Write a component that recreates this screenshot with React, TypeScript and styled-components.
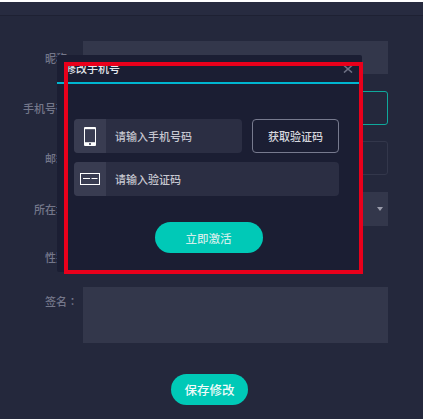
import React from 'react';
import styled, { createGlobalStyle } from 'styled-components';

const GlobalStyle = createGlobalStyle`
  html, body {
    margin: 0;
    padding: 0;
    background: #24283c;
    font-family: "Noto Sans CJK SC", "Noto Sans", sans-serif;
  }
`;

const Page = styled.div`
  position: relative;
  width: 423px;
  height: 419px;
  overflow: hidden;
  background: #24283c;
  border-top: 2px solid #fff;
  box-sizing: border-box;
`;

const TopBar = styled.div`
  height: 13px;
  background: #272b40;
  border-bottom: 1px solid #1e2133;
`;

const Form = styled.div`
  display: flex;
  flex-direction: column;
  gap: 16px;
  padding: 25px 35px 0 0;
`;

const Row = styled.div<{ $height?: number; $pushed?: boolean }>`
  display: grid;
  grid-template-columns: 78px 305px;
  column-gap: 5px;
  align-items: center;
  height: ${(p) => p.$height ?? 34}px;
  margin-top: ${(p) => (p.$pushed ? 1 : 0)}px;
`;

const SignRow = styled(Row)`
  align-items: start;
`;

const Label = styled.div<{ $offset?: number }>`
  font-size: 11px;
  font-weight: 500;
  line-height: 16px;
  color: #74778a;
  text-align: right;
  white-space: nowrap;
  padding-top: ${(p) => p.$offset ?? 0}px;
`;

const Colon = styled.span`
  font-family: "Noto Sans CJK TC", sans-serif;
`;

const Field = styled.div<{ $variant?: 'filled' | 'focus' | 'outline' }>`
  position: relative;
  height: 100%;
  box-sizing: border-box;
  border-radius: ${(p) => (p.$variant === 'filled' || !p.$variant ? 0 : 3)}px;
  background: ${(p) => (p.$variant === 'filled' || !p.$variant ? '#33374b' : 'transparent')};
  border: ${(p) =>
    p.$variant === 'focus'
      ? '1px solid #0fa89c'
      : p.$variant === 'outline'
        ? '1px solid #33374b'
        : 'none'};
`;

const Caret = styled.span`
  position: absolute;
  right: 5px;
  top: 15px;
  border-left: 3px solid transparent;
  border-right: 3px solid transparent;
  border-top: 4px solid #9a9cab;
`;

const SaveRow = styled.div`
  display: flex;
  justify-content: center;
  margin-top: 31px;
  width: 419px;
`;

const PillButton = styled.button<{ $width: number; $size: number; $color: string }>`
  width: ${(p) => p.$width}px;
  height: 31px;
  padding: 0;
  border: none;
  border-radius: 16px;
  background: #00c9b7;
  color: ${(p) => p.$color};
  font-family: inherit;
  font-size: ${(p) => p.$size}px;
  font-weight: 500;
`;

const Modal = styled.div`
  position: absolute;
  left: 57px;
  top: 53px;
  width: 305px;
  height: 217px;
  display: flex;
  flex-direction: column;
  background: #1b1e33;
  border-radius: 2px;
`;

const ModalHeader = styled.div`
  height: 29px;
  box-sizing: border-box;
  padding-left: 8px;
  display: flex;
  align-items: flex-end;
  justify-content: space-between;
  border-bottom: 2px solid #00b5d0;
`;

const ModalTitle = styled.div`
  font-size: 11px;
  font-weight: 500;
  line-height: 14px;
  margin-bottom: 7px;
  color: #e6e7ec;
`;

const CloseIcon = styled.svg`
  width: 10px;
  height: 8px;
  margin: 0 9px 9px 0;
  stroke: #6d7084;
  stroke-width: 1.6;
  fill: none;
`;

const ModalBody = styled.div`
  display: flex;
  flex-direction: column;
  gap: 9px;
  padding: 35px 23px 0 17px;
`;

const InputLine = styled.div`
  display: flex;
  gap: 10px;
  height: 34px;
`;

const InputBox = styled.div`
  flex: 1;
  display: flex;
  align-items: center;
  background: #2b2e43;
  border-radius: 4px;
  overflow: hidden;
`;

const IconCell = styled.div`
  width: 32px;
  height: 100%;
  flex-shrink: 0;
  display: flex;
  align-items: center;
  justify-content: center;
  background: #393c51;
`;

const Placeholder = styled.span`
  margin-left: 9px;
  font-size: 11px;
  font-weight: 500;
  color: #c6c7d0;
`;

const CodeButton = styled.button`
  width: 87px;
  box-sizing: border-box;
  padding: 0;
  background: transparent;
  border: 1px solid #777a8e;
  border-radius: 4px;
  color: #d5d6dd;
  font-family: inherit;
  font-size: 11px;
  font-weight: 500;
`;

const ActivateRow = styled.div`
  display: flex;
  justify-content: center;
  margin-top: 17px;
  padding-left: 4px;
`;

const Highlight = styled.div`
  position: absolute;
  left: 64px;
  top: 60px;
  width: 299px;
  height: 212px;
  box-sizing: border-box;
  border: 4px solid #e9001b;
`;

const PhoneIcon = () => (
  <svg width="12" height="19" viewBox="0 0 12 19">
    <rect x="0" y="0" width="12" height="19" rx="1" fill="#fff" />
    <rect x="1" y="2.2" width="10" height="13" fill="#393c51" />
    <rect x="5" y="16.2" width="2" height="1.6" fill="#393c51" />
  </svg>
);

const CodeIcon = () => (
  <svg width="20" height="12" viewBox="0 0 20 12" fill="none" stroke="#fff">
    <rect x="0.5" y="0.5" width="19" height="11" />
    <path d="M3 5.5h7M11.5 5.5h6" />
  </svg>
);

const App: React.FC = () => {
  return (
    <Page>
      <GlobalStyle />
      <TopBar />
      <Form>
        <Row $height={33}>
          <Label>昵称：</Label>
          <Field />
        </Row>
        <Row $pushed>
          <Label>手机号码：</Label>
          <Field $variant="focus" />
        </Row>
        <Row>
          <Label>邮箱：</Label>
          <Field $variant="outline" />
        </Row>
        <Row $pushed>
          <Label>所在地：</Label>
          <Field $variant="filled">
            <Caret />
          </Field>
        </Row>
        <Row $height={29}>
          <Label>性别：</Label>
          <div />
        </Row>
        <SignRow $height={56}>
          <Label $offset={6}>
            签名<Colon>：</Colon>
          </Label>
          <Field />
        </SignRow>
      </Form>
      <SaveRow>
        <PillButton $width={77} $size={12.5} $color="#f2fbfa">
          保存修改
        </PillButton>
      </SaveRow>
      <Modal>
        <ModalHeader>
          <ModalTitle>修改手机号</ModalTitle>
          <CloseIcon viewBox="0 0 10 8">
            <path d="M1 0.5l8 7M9 0.5l-8 7" />
          </CloseIcon>
        </ModalHeader>
        <ModalBody>
          <InputLine>
            <InputBox>
              <IconCell>
                <PhoneIcon />
              </IconCell>
              <Placeholder>请输入手机号码</Placeholder>
            </InputBox>
            <CodeButton>获取验证码</CodeButton>
          </InputLine>
          <InputLine>
            <InputBox>
              <IconCell>
                <CodeIcon />
              </IconCell>
              <Placeholder>请输入验证码</Placeholder>
            </InputBox>
          </InputLine>
          <ActivateRow>
            <PillButton $width={108} $size={11.5} $color="#cfeeeb">
              立即激活
            </PillButton>
          </ActivateRow>
        </ModalBody>
      </Modal>
      <Highlight />
    </Page>
  );
};

export default App;
